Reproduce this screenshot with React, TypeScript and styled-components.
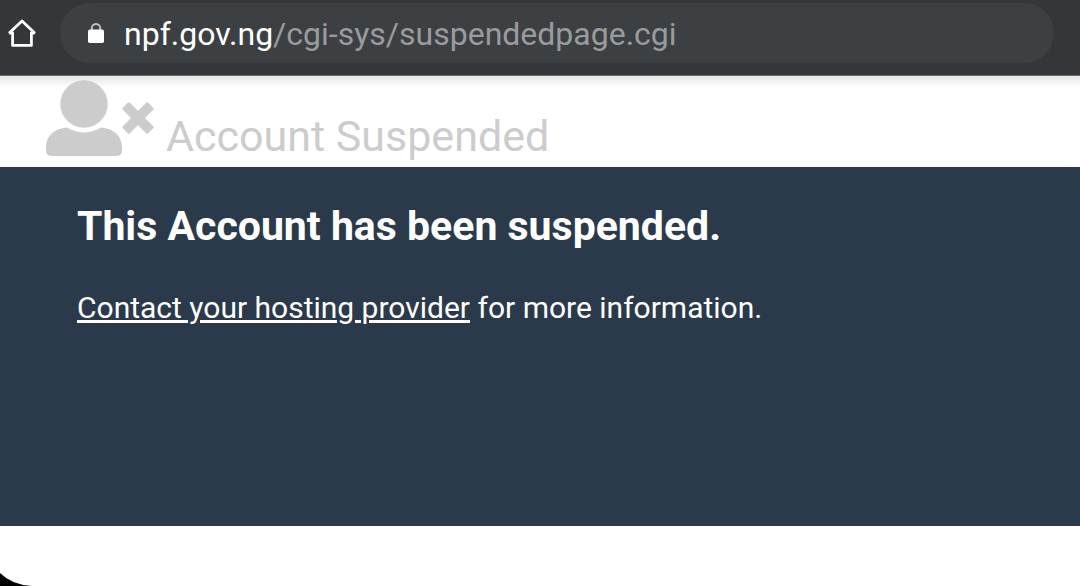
import React from "react";
import styled, { createGlobalStyle } from "styled-components";

const GlobalStyle = createGlobalStyle`
  * { box-sizing: border-box; }
  body {
    margin: 0;
    background: #fff;
    font-family: Roboto, "Liberation Sans", sans-serif;
  }
`;

const Screen = styled.div`
  position: relative;
  display: flex;
  flex-direction: column;
  min-height: 100vh;
`;

const BrowserBar = styled.header`
  display: flex;
  align-items: center;
  gap: 24px;
  padding: 3px 26px 12px 8px;
  background: #35363a;
  border-bottom: 1px solid #6b6b6d;
`;

const HomeButton = styled.button`
  display: flex;
  padding: 0;
  border: 0;
  background: none;
  color: #fff;
`;

const AddressField = styled.button`
  display: flex;
  flex: 1;
  align-items: center;
  gap: 20px;
  height: 60px;
  padding: 2px 28px 0;
  border: 0;
  border-radius: 30px;
  background: #3c4043;
  color: #9a9b9e;
  font: 400 32px/40px Roboto, "Liberation Sans", sans-serif;
  text-align: left;
`;

const Host = styled.span`
  color: #fff;
`;

const PageHeader = styled.div`
  display: flex;
  align-items: flex-end;
  gap: 11px;
  padding: 4px 46px 11px;
  background: linear-gradient(#e6e6e6, #fff 12px);
  color: #ccc;
`;

const PageTitle = styled.span`
  font-size: 43px;
  line-height: 40px;
`;

const Notice = styled.main`
  flex: 1;
  padding: 35px 77px;
  background: #2a3a4b;
  color: #fff;
`;

const NoticeHeading = styled.h1`
  margin: 0 0 34px;
  font-size: 41px;
  line-height: 48px;
  font-weight: 700;
`;

const NoticeText = styled.p`
  margin: 0;
  font-size: 30px;
  line-height: 48px;
`;

const ProviderLink = styled.a`
  color: inherit;
  text-decoration: underline;
`;

const PageFooter = styled.footer`
  height: 60px;
  background: #fff;
`;

const ScreenCorner = styled.svg`
  position: absolute;
  bottom: 0;
  left: 0;
`;

const HomeIcon = () => (
  <svg width="28" height="30" viewBox="0 0 28 30" fill="none" stroke="currentColor" strokeWidth="2.8" aria-hidden="true">
    <path d="M1 15.2 14 2.9 27 15.2M1.200 15H4.600V27.400H23.400V15H26.800" strokeLinejoin="round" />
  </svg>
);

const LockIcon = () => (
  <svg width="16" height="22" viewBox="0 0 16 22" aria-hidden="true">
    <path d="M3.800 9V5.200a4.200 4.200 0 0 1 8.400 0V9" fill="none" stroke="#c4c5c7" strokeWidth="1.9" />
    <rect x="0" y="6.600" width="16" height="13.400" rx="1.8" fill="#fff" />
  </svg>
);

const UserRemovedIcon = () => (
  <svg width="109" height="76" viewBox="0 0 109 76" fill="currentColor" aria-hidden="true">
    <circle cx="38" cy="24" r="23.7" />
    <path d="M21 47.6C30 54 46 54 55 47.6C68 48.5 76 56 76 68V70Q76 76 70 76H6Q0 76 0 70V68C0 56 8 48.5 21 47.6Z" />
    <g transform="translate(92 38) rotate(45)">
      <rect x="-18" y="-5" width="36" height="10" rx="1.5" />
      <rect x="-5" y="-18" width="10" height="36" rx="1.5" />
    </g>
  </svg>
);

export default function App() {
  return (
    <>
      <GlobalStyle />
      <Screen>
        <BrowserBar>
          <HomeButton type="button" aria-label="Home">
            <HomeIcon />
          </HomeButton>
          <AddressField type="button">
            <LockIcon />
            <span>
              <Host>npf.gov.ng</Host>/cgi-sys/suspendedpage.cgi
            </span>
          </AddressField>
        </BrowserBar>
        <PageHeader>
          <UserRemovedIcon />
          <PageTitle>Account Suspended</PageTitle>
        </PageHeader>
        <Notice>
          <NoticeHeading>This Account has been suspended.</NoticeHeading>
          <NoticeText>
            <ProviderLink href="#provider">Contact your hosting provider</ProviderLink> for more information.
          </NoticeText>
        </Notice>
        <PageFooter />
        <ScreenCorner width="32" height="13" viewBox="0 0 32 13" aria-hidden="true">
          <path d="M0 0Q12 12 32 13H0Z" fill="#000" />
        </ScreenCorner>
      </Screen>
    </>
  );
}
